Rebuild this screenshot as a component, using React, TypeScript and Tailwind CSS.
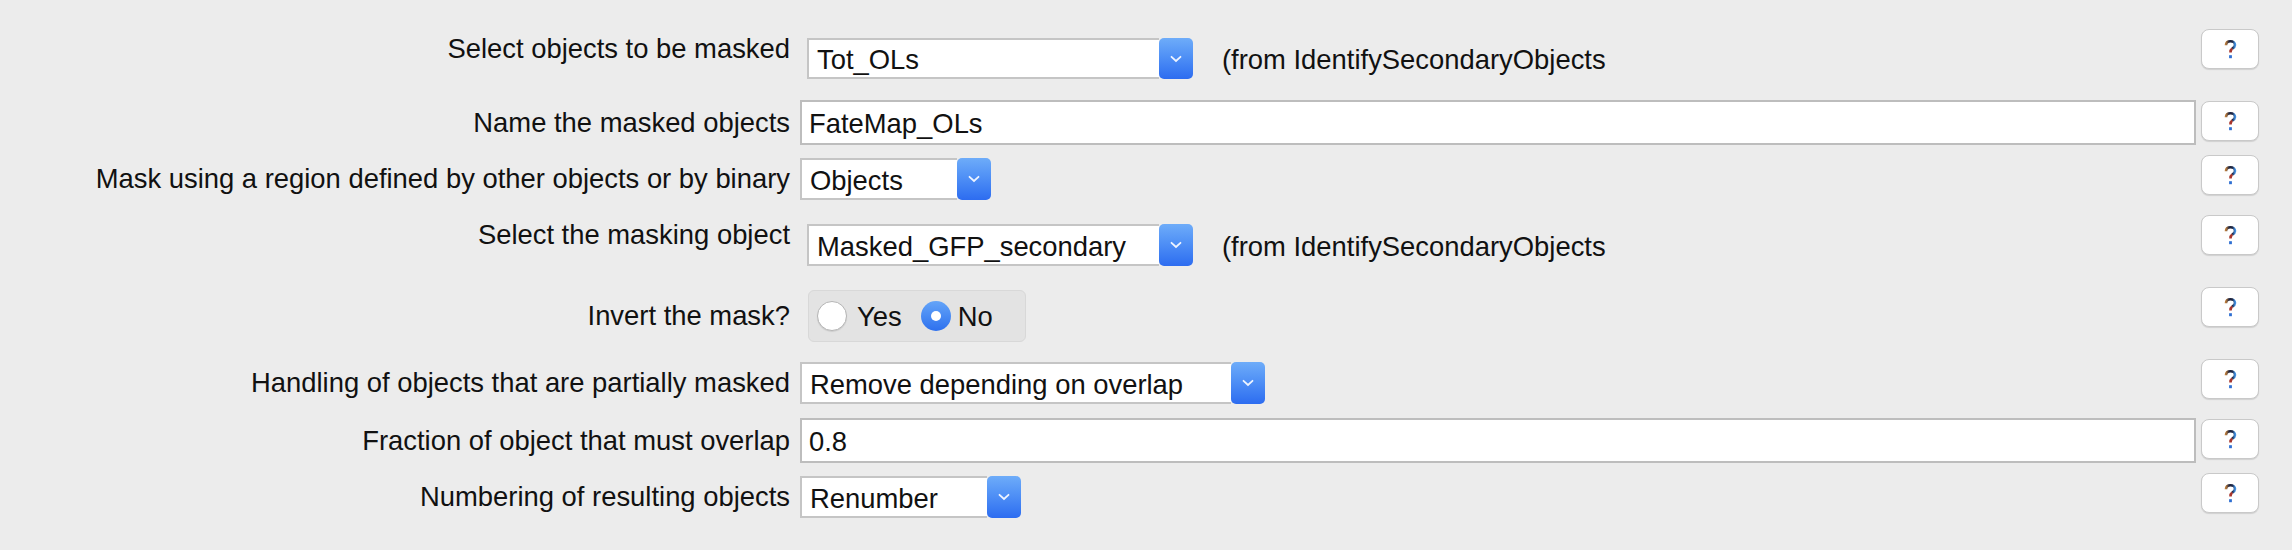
import type { ReactNode } from 'react'

function HelpIcon() {
  return (
    <svg width="13" height="19" viewBox="0 0 13 19">
      <defs>
        <linearGradient id="qarc" x1="0" y1="0" x2="1" y2="0">
          <stop offset="0" stopColor="#b87a3a" />
          <stop offset="0.35" stopColor="#1d2440" />
          <stop offset="0.7" stopColor="#1d2440" />
          <stop offset="1" stopColor="#3f8de0" />
        </linearGradient>
      </defs>
      <path
        d="M2 5.2 C2 2.6 4 1.3 6.5 1.3 C9 1.3 11 2.7 11 5 C11 6.9 9.6 7.8 8.2 8.7"
        stroke="url(#qarc)"
        strokeWidth="2.6"
        fill="none"
      />
      <path d="M8.2 8.7 C7 9.5 6.5 10.3 6.5 12.6" stroke="#a8352c" strokeWidth="2.6" fill="none" />
      <rect x="5.1" y="15.2" width="2.8" height="3" fill="#2f6fd2" />
    </svg>
  )
}

function HelpButton() {
  return (
    <div className="ml-[5px] mr-[33px] w-[58px] h-[40px] shrink-0 rounded-[8px] bg-white border border-[#c9c9c9] shadow-[0_1px_1px_rgba(0,0,0,0.12)] flex items-center justify-center">
      <HelpIcon />
    </div>
  )
}

function Chevron() {
  return (
    <svg width="12" height="8" viewBox="0 0 12 8">
      <path d="M1.5 1.8 L6 6 L10.5 1.8" stroke="#eef4ff" strokeWidth="1.8" fill="none" strokeLinecap="round" />
    </svg>
  )
}

function Select({ value, width }: { value: string; width: string }) {
  return (
    <div className={`flex h-full ${width}`}>
      <div className="flex-1 flex items-center bg-white border-2 border-r-0 border-[#c5c5c5] pl-[8px] pt-[3px] whitespace-nowrap">
        {value}
      </div>
      <div className="w-[34px] shrink-0 rounded-[5px] bg-linear-to-b from-[#6eacf9] to-[#2d6cf0] flex items-center justify-center">
        <Chevron />
      </div>
    </div>
  )
}

function TextInput({ value }: { value: string }) {
  return (
    <div className="w-full h-full flex items-center bg-white border-2 border-[#bdbdbd] pl-[7px] pt-[2px]">{value}</div>
  )
}

function Radio({ checked }: { checked: boolean }) {
  if (checked) {
    return (
      <div className="w-[30px] h-[30px] rounded-full bg-linear-to-b from-[#64a4f8] to-[#2e70ee] flex items-center justify-center">
        <div className="w-[10px] h-[10px] rounded-full bg-white" />
      </div>
    )
  }
  return <div className="w-[30px] h-[30px] rounded-full bg-white border border-[#b5b5b5] shadow-[0_1px_1px_rgba(0,0,0,0.1)]" />
}

function Row({
  label,
  height,
  labelCls,
  ctrlCls,
  children,
}: {
  label: string
  height: string
  labelCls: string
  ctrlCls: string
  children: ReactNode
}) {
  return (
    <div className={`flex items-start ${height}`}>
      <div className={`w-[790px] shrink-0 flex items-center justify-end whitespace-nowrap ${labelCls}`}>{label}</div>
      <div className={`ml-[10px] flex-1 flex items-center ${ctrlCls}`}>{children}</div>
      <HelpButton />
    </div>
  )
}

export default function App() {
  return (
    <div className="w-full min-h-[550px] bg-[#ececec] pt-[29px] text-[27.4px] text-[#111] font-['Liberation_Sans',Arial,sans-serif]">
      <Row label="Select objects to be masked" height="h-[72px]" labelCls="h-[40px]" ctrlCls="mt-[9px] h-[41px] pl-[7px]">
        <Select value="Tot_OLs" width="w-[386px]" />
        <span className="ml-[29px] pt-[3px] whitespace-nowrap">(from IdentifySecondaryObjects</span>
      </Row>

      <Row label="Name the masked objects" height="h-[54px]" labelCls="-mt-px h-[45px]" ctrlCls="-mt-px h-[45px]">
        <TextInput value="FateMap_OLs" />
      </Row>

      <Row
        label="Mask using a region defined by other objects or by binary"
        height="h-[60px]"
        labelCls="mt-[3px] h-[42px]"
        ctrlCls="mt-[3px] h-[42px]"
      >
        <Select value="Objects" width="w-[191px]" />
      </Row>

      <Row label="Select the masking object" height="h-[72px]" labelCls="h-[40px]" ctrlCls="mt-[9px] h-[42px] pl-[7px]">
        <Select value="Masked_GFP_secondary" width="w-[386px]" />
        <span className="ml-[29px] pt-[3px] whitespace-nowrap">(from IdentifySecondaryObjects</span>
      </Row>

      <Row label="Invert the mask?" height="h-[72px]" labelCls="mt-[3px] h-[52px]" ctrlCls="mt-[3px] h-[52px] pl-[8px]">
        <div className="h-full w-[218px] flex items-center rounded-[6px] bg-[#e3e3e3] border border-[#d8d8d8] pl-[8px]">
          <Radio checked={false} />
          <span className="ml-[10px] pt-[2px]">Yes</span>
          <div className="ml-[19px]">
            <Radio checked />
          </div>
          <span className="ml-[7px] pt-[2px]">No</span>
        </div>
      </Row>

      <Row
        label="Handling of objects that are partially masked"
        height="h-[60px]"
        labelCls="mt-[3px] h-[42px]"
        ctrlCls="mt-[3px] h-[42px]"
      >
        <Select value="Remove depending on overlap" width="w-[465px]" />
      </Row>

      <Row label="Fraction of object that must overlap" height="h-[54px]" labelCls="-mt-px h-[45px]" ctrlCls="-mt-px h-[45px]">
        <TextInput value="0.8" />
      </Row>

      <Row
        label="Numbering of resulting objects"
        height="h-[57px]"
        labelCls="mt-[3px] h-[42px]"
        ctrlCls="mt-[3px] h-[42px]"
      >
        <Select value="Renumber" width="w-[221px]" />
      </Row>
    </div>
  )
}
